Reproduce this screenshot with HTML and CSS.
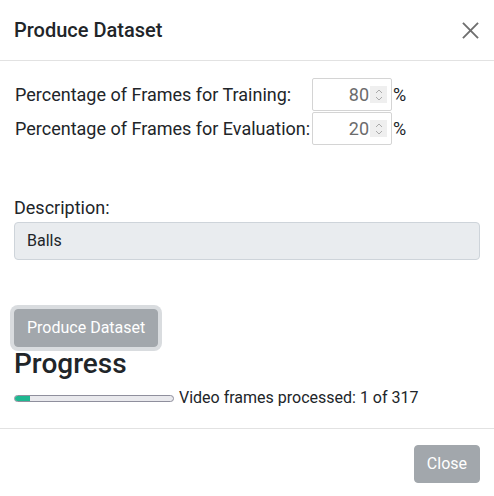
FILE: index.html
```html
<!DOCTYPE html>
<html>
<head>
<meta charset="utf-8">
<link rel="stylesheet" href="styles.css">
</head>
<body>
<div class="modal">
  <div class="modal-header">
    <h5 class="modal-title">Produce Dataset</h5>
    <span class="close-btn" aria-label="Close">
      <svg width="18" height="18" viewBox="0 0 18 18"><path d="M1 1 L17 17 M17 1 L1 17" stroke="#6f6f6f" stroke-width="2" fill="none"/></svg>
    </span>
  </div>
  <div class="modal-body">
    <div class="pct-grid">
      <div class="pct-label">Percentage of Frames for Training:</div>
      <div class="num-input"><span class="num-val">80</span><span class="spin"><svg width="10" height="16" viewBox="0 0 10 16"><path d="M2 6 L5 3 L8 6 M2 10 L5 13 L8 10" stroke="#aaaaaa" stroke-width="1" fill="none"/></svg></span></div>
      <div class="pct-sign">%</div>
      <div class="pct-label">Percentage of Frames for Evaluation:</div>
      <div class="num-input"><span class="num-val">20</span><span class="spin"><svg width="10" height="16" viewBox="0 0 10 16"><path d="M2 6 L5 3 L8 6 M2 10 L5 13 L8 10" stroke="#aaaaaa" stroke-width="1" fill="none"/></svg></span></div>
      <div class="pct-sign">%</div>
    </div>
    <div class="desc-group">
      <label class="desc-label">Description:</label>
      <div class="desc-input">Balls</div>
    </div>
    <button class="btn btn-produce">Produce Dataset</button>
    <h3 class="progress-title">Progress</h3>
    <div class="progress-row">
      <div class="progress-track"><div class="progress-fill" style="width: 15px"></div></div>
      <span class="progress-text">Video frames processed: 1 of 317</span>
    </div>
  </div>
  <div class="modal-footer">
    <button class="btn btn-close">Close</button>
  </div>
</div>
</body>
</html>
```

FILE: styles.css
```css
* { box-sizing: border-box; }
html, body { margin: 0; padding: 0; background: #fff; }
body {
  font-family: Roboto, "Liberation Sans", sans-serif;
  font-size: 16px;
  color: #212529;
  line-height: 1.5;
}
.modal { width: 494px; height: 496px; display: flex; flex-direction: column; }
.modal-header {
  display: flex;
  justify-content: space-between;
  align-items: center;
  padding: 14px 14px 15px 14px;
  border-bottom: 1px solid #e2e2e2;
  height: 61px;
  flex: none;
}
.modal-title { margin: 0; font-size: 20px; font-weight: 500; line-height: 30px; }
.close-btn { display: flex; width: 17px; height: 17px; margin-right: 1px; margin-top: 1px; }
.close-btn svg { width: 17px; height: 17px; }
.modal-body { padding: 17px 14px 0 14px; flex: 1; }
.pct-grid {
  display: grid;
  grid-template-columns: 298px 80px auto;
  grid-auto-rows: 33px;
  row-gap: 1px;
  align-items: center;
  font-size: 18px;
}
.pct-label { padding-left: 1px; white-space: nowrap; line-height: 27px; }
.num-input {
  height: 33px;
  border: 1px solid #d4d4d4;
  border-radius: 2px;
  display: flex;
  align-items: center;
  justify-content: flex-end;
  padding-right: 4px;
  color: #6c6c6c;
  line-height: 27px;
}
.num-val { margin-right: 1px; }
.spin {
  width: 17px; height: 17px;
  background: #efefef;
  display: flex; align-items: center; justify-content: center;
}
.pct-sign { padding-left: 1px; line-height: 27px; }
.desc-group { margin-top: 50px; }
.desc-label { display: block; font-size: 18px; line-height: 25px; height: 25px; margin-bottom: 2px; }
.desc-input {
  height: 38px;
  background: #e9ecef;
  border: 1px solid #ced4da;
  border-radius: 4px;
  padding: 6px 12px;
  color: #212529;
  line-height: 24px;
}
.btn {
  font-family: inherit;
  font-size: 16px;
  line-height: 24px;
  border: 1px solid #a2a7ac;
  border-radius: 4px;
  background: #a2a7ac;
  color: #fff;
  padding: 6px 12px;
  margin: 0;
}
.btn-produce {
  margin-top: 49px;
  height: 38px;
  box-shadow: 0 0 0 4px #d9dcdf;
  display: block;
}
.progress-title { margin: 0; font-size: 28px; font-weight: 500; line-height: 33px; }
.progress-row { display: flex; align-items: center; margin-top: 6px; }
.progress-track {
  width: 160px; height: 7px;
  border: 1px solid #8f8f9d;
  border-radius: 4px;
  background: #e9e9ed;
  overflow: hidden;
}
.progress-fill { height: 100%; background: #1fb891; }
.progress-text { margin-left: 5px; line-height: 24px; }
.modal-footer {
  border-top: 1px solid #e2e2e2;
  padding: 16px 14px 13px 14px;
  display: flex;
  justify-content: flex-end;
  flex: none;
}
.btn-close { height: 38px; }
```
